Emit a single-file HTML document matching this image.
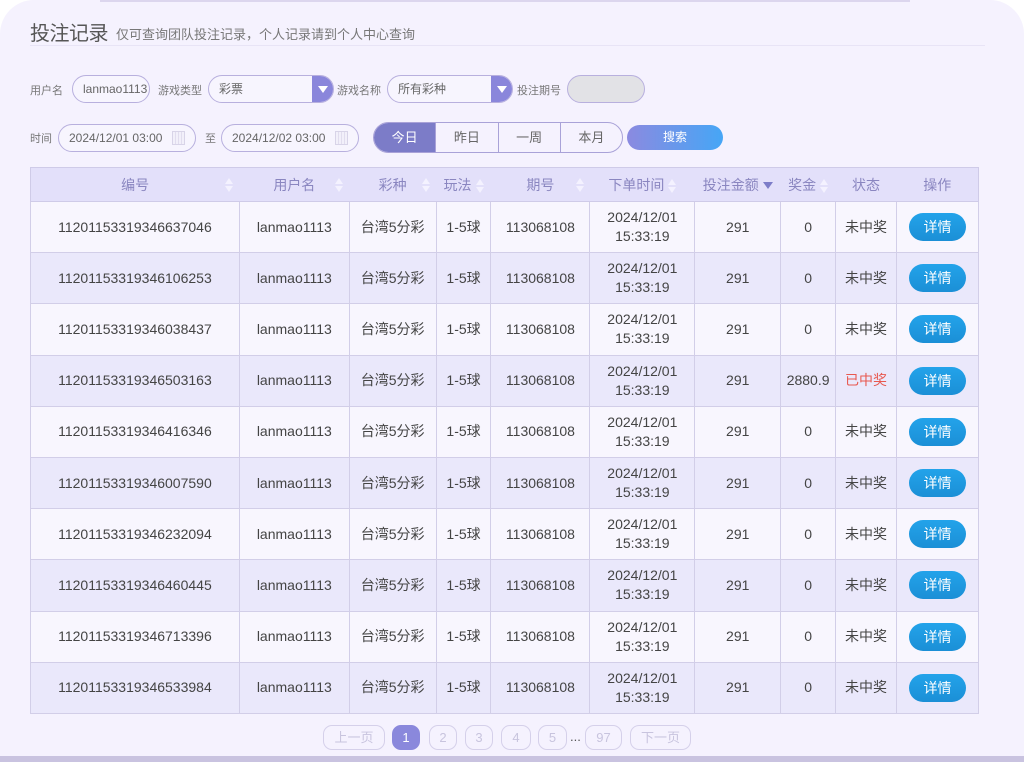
<!DOCTYPE html>
<html><head><meta charset="utf-8"><style>
*{margin:0;padding:0;box-sizing:border-box}
body{width:1024px;height:762px;background:#fff;font-family:"Liberation Sans","Noto Sans CJK SC",sans-serif;position:relative;overflow:hidden}
.card{position:absolute;left:0;top:0;width:1024px;height:757px;background:#f5f2fe;border-radius:34px 34px 0 0;}
.band{position:absolute;left:0;top:756px;width:1024px;height:6px;background:#c9c3e0}
.topline{position:absolute;left:100px;top:0;width:810px;height:2px;background:#dcd6ee}
.t{position:absolute;white-space:nowrap}
.h1{left:30px;top:17px;font-size:20px;color:#555;letter-spacing:-0.5px}
.sub{left:116px;top:24px;font-size:13px;color:#777}
.hr{position:absolute;left:30px;top:45px;width:955px;height:1px;background:#e8e4f6}
.lab{font-size:11px;color:#777}
.inp{position:absolute;border:1px solid #b8b0de;border-radius:15px;background:#f7f5fe;font-size:12px;color:#666;padding-left:10px;line-height:26px;height:28px;overflow:hidden;white-space:nowrap}
.sel .ar{position:absolute;right:-1px;top:-1px;width:22px;height:28px;background:#8a86db;border-radius:0 14px 14px 0}
.sel .ar:after{content:"";position:absolute;left:6px;top:11px;border-left:5px solid transparent;border-right:5px solid transparent;border-top:7px solid #fff}
.cal{position:absolute;right:10px;top:6px;width:13px;height:14px;border:1px solid #d8d4e8;background:repeating-linear-gradient(90deg,#f2f0fa 0 2px,#e1ddee 2px 3px)}
.seg{position:absolute;left:373px;top:122px;width:250px;height:31px;border:1px solid #a9a2d8;border-radius:16px;overflow:hidden;display:flex;font-size:13px;color:#666}
.seg div{flex:1;text-align:center;line-height:29px;border-left:1px solid #a9a2d8}
.seg div:first-child{border:none;background:#7c7cc8;color:#fff}
.btn{position:absolute;left:627px;top:125px;width:96px;height:25px;border-radius:13px;background:linear-gradient(90deg,#8b8ae0,#46a6f6);color:#fff;font-size:12px;text-align:center;line-height:25px}
table{position:absolute;left:30px;top:167px;border-collapse:collapse;width:949px;font-size:14px;color:#444}
th{height:34px;background:#e3e0fa;color:#8a86c0;font-weight:normal;font-size:14px;border-bottom:1px solid #cfcbe8;position:relative}
td{border:1px solid #d2cee8;text-align:center;height:51.2px;line-height:19px}
tr:nth-child(even) td{background:#f8f6fe}
tr:nth-child(odd) td{background:#eae8fb}
table{border:1px solid #cfcbe8}
.s{display:inline-block;width:8px;height:14px;vertical-align:middle;margin-left:4px;position:relative}
.s:before,.s:after{content:"";position:absolute;left:0;border-left:4px solid transparent;border-right:4px solid transparent}
.s:before{top:0;border-bottom:6px solid #f4f2ff}.s:after{bottom:0;border-top:6px solid #f4f2ff}
.d{display:inline-block;border-left:5px solid transparent;border-right:5px solid transparent;border-top:7px solid #7c7cc8;margin-left:4px;vertical-align:middle}
.x{display:inline-block;width:57px;height:28px;border-radius:14px;background:linear-gradient(#23a3ea,#1b8fd6);color:#fff;line-height:28px;font-size:14px}
.pg{position:absolute;top:725px;height:25px;border:1px solid #d5d0ea;border-radius:9px;color:#c8c4de;font-size:13px;text-align:center;line-height:23px}
</style></head><body>
<div class="card"></div><div class="band"></div><div class="topline"></div>
<div class="t h1">投注记录</div>
<div class="t sub">仅可查询团队投注记录，个人记录请到个人中心查询</div>
<div class="hr"></div>
<div class="t lab" style="left:30px;top:82px">用户名</div>
<div class="inp" style="left:72px;top:75px;width:78px">lanmao1113</div>
<div class="t lab" style="left:158px;top:82px">游戏类型</div>
<div class="inp sel" style="left:208px;top:75px;width:126px">彩票<div class="ar"></div></div>
<div class="t lab" style="left:337px;top:82px">游戏名称</div>
<div class="inp sel" style="left:387px;top:75px;width:126px">所有彩种<div class="ar"></div></div>
<div class="t lab" style="left:517px;top:82px">投注期号</div>
<div class="inp" style="left:567px;top:75px;width:78px;background:#e2e2e6"></div>
<div class="t lab" style="left:30px;top:130px">时间</div>
<div class="inp" style="left:58px;top:124px;width:138px">2024/12/01 03:00<div class="cal"></div></div>
<div class="t lab" style="left:205px;top:130px">至</div>
<div class="inp" style="left:221px;top:124px;width:138px">2024/12/02 03:00<div class="cal"></div></div>
<div class="seg"><div>今日</div><div>昨日</div><div>一周</div><div>本月</div></div>
<div class="btn">搜索</div>
<table>
<colgroup><col style="width:209px"><col style="width:110px"><col style="width:87px"><col style="width:55px"><col style="width:99px"><col style="width:105px"><col style="width:86px"><col style="width:55px"><col style="width:61px"><col style="width:82px"></colgroup>
<tr><th>编号<span class="s" style="position:absolute;right:6px;top:10px"></span></th><th>用户名<span class="s" style="position:absolute;right:6px;top:10px"></span></th><th>彩种<span class="s" style="position:absolute;right:6px;top:10px"></span></th><th>玩法<span class="s"></span></th><th>期号<span class="s" style="position:absolute;right:6px;top:10px"></span></th><th>下单时间<span class="s"></span></th><th>投注金额<span class="d"></span></th><th>奖金<span class="s"></span></th><th>状态</th><th>操作</th></tr>
<tr><td>11201153319346637046</td><td>lanmao1113</td><td>台湾5分彩</td><td>1-5球</td><td>113068108</td><td>2024/12/01<br>15:33:19</td><td>291</td><td>0</td><td>未中奖</td><td><span class="x">详情</span></td></tr>
<tr><td>11201153319346106253</td><td>lanmao1113</td><td>台湾5分彩</td><td>1-5球</td><td>113068108</td><td>2024/12/01<br>15:33:19</td><td>291</td><td>0</td><td>未中奖</td><td><span class="x">详情</span></td></tr>
<tr><td>11201153319346038437</td><td>lanmao1113</td><td>台湾5分彩</td><td>1-5球</td><td>113068108</td><td>2024/12/01<br>15:33:19</td><td>291</td><td>0</td><td>未中奖</td><td><span class="x">详情</span></td></tr>
<tr><td>11201153319346503163</td><td>lanmao1113</td><td>台湾5分彩</td><td>1-5球</td><td>113068108</td><td>2024/12/01<br>15:33:19</td><td>291</td><td>2880.9</td><td style="color:#e8584f">已中奖</td><td><span class="x">详情</span></td></tr>
<tr><td>11201153319346416346</td><td>lanmao1113</td><td>台湾5分彩</td><td>1-5球</td><td>113068108</td><td>2024/12/01<br>15:33:19</td><td>291</td><td>0</td><td>未中奖</td><td><span class="x">详情</span></td></tr>
<tr><td>11201153319346007590</td><td>lanmao1113</td><td>台湾5分彩</td><td>1-5球</td><td>113068108</td><td>2024/12/01<br>15:33:19</td><td>291</td><td>0</td><td>未中奖</td><td><span class="x">详情</span></td></tr>
<tr><td>11201153319346232094</td><td>lanmao1113</td><td>台湾5分彩</td><td>1-5球</td><td>113068108</td><td>2024/12/01<br>15:33:19</td><td>291</td><td>0</td><td>未中奖</td><td><span class="x">详情</span></td></tr>
<tr><td>11201153319346460445</td><td>lanmao1113</td><td>台湾5分彩</td><td>1-5球</td><td>113068108</td><td>2024/12/01<br>15:33:19</td><td>291</td><td>0</td><td>未中奖</td><td><span class="x">详情</span></td></tr>
<tr><td>11201153319346713396</td><td>lanmao1113</td><td>台湾5分彩</td><td>1-5球</td><td>113068108</td><td>2024/12/01<br>15:33:19</td><td>291</td><td>0</td><td>未中奖</td><td><span class="x">详情</span></td></tr>
<tr><td>11201153319346533984</td><td>lanmao1113</td><td>台湾5分彩</td><td>1-5球</td><td>113068108</td><td>2024/12/01<br>15:33:19</td><td>291</td><td>0</td><td>未中奖</td><td><span class="x">详情</span></td></tr>
</table>
<div class="pg" style="left:323px;width:62px">上一页</div>
<div class="pg" style="left:392px;width:28px;background:#8a88dc;border-color:#8a88dc;color:#fff">1</div>
<div class="pg" style="left:429px;width:28px">2</div>
<div class="pg" style="left:465px;width:28px">3</div>
<div class="pg" style="left:501px;width:30px">4</div>
<div class="pg" style="left:538px;width:29px">5</div>
<div class="t" style="left:570px;top:729px;font-size:13px;color:#555">...</div>
<div class="pg" style="left:585px;width:37px">97</div>
<div class="pg" style="left:630px;width:61px">下一页</div>
</body></html>
